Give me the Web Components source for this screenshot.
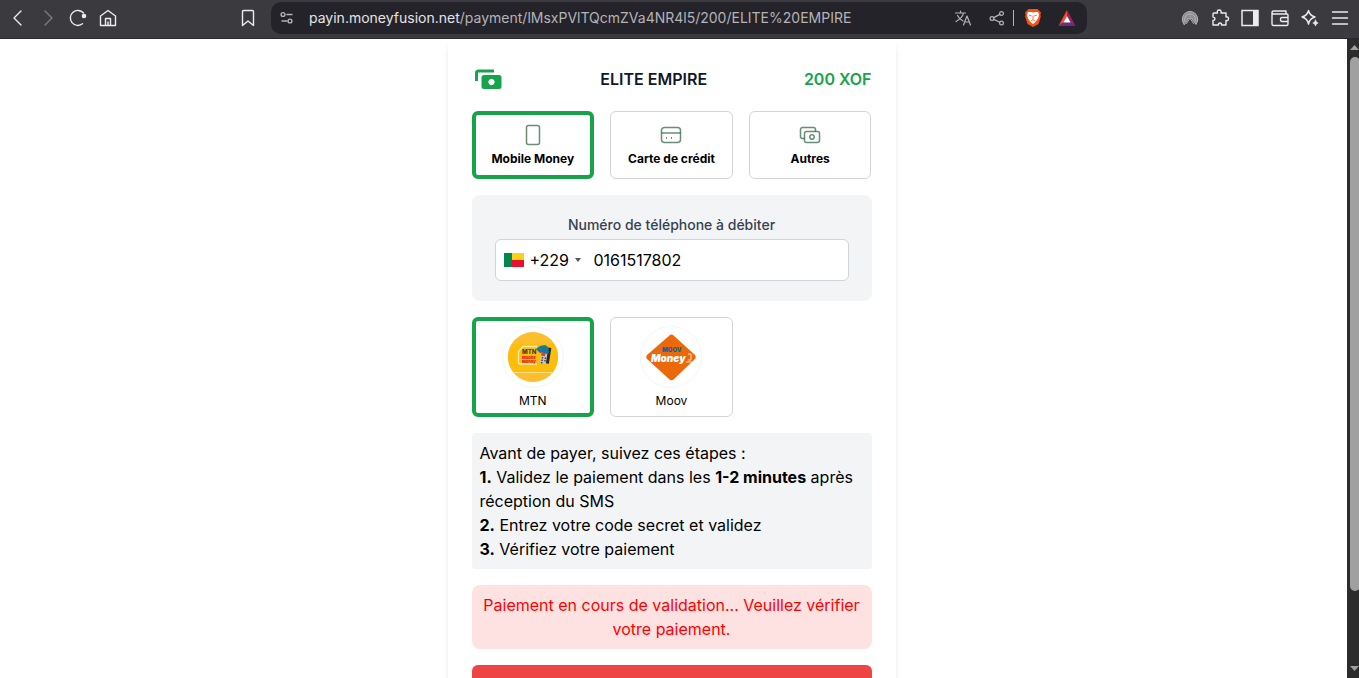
<!DOCTYPE html>
<html lang="fr">
<head>
<meta charset="utf-8">
<meta name="viewport" content="width=device-width, initial-scale=1">
<title>ELITE EMPIRE</title>
<style>
html, body { margin: 0; height: 100%; }
body { font-family: Inter, "Liberation Sans", sans-serif; font-size: 16px; line-height: 24px; color: #000; background: #fff; overflow: hidden; }
</style>
</head>
<body>
<app-window>
  <browser-bar slot="bar" host="payin.moneyfusion.net" path="/payment/lMsxPVlTQcmZVa4NR4l5/200/ELITE%20EMPIRE"></browser-bar>
  <pay-card merchant="ELITE EMPIRE" amount="200 XOF">
    <option-grid>
      <method-option label="Mobile Money" selected>
        <svg width="24" height="24" viewBox="0 0 24 24" fill="none" stroke="#14532d" stroke-opacity=".65" stroke-width="1.5"><rect x="5.5" y="2.5" width="13" height="19" rx="2"/></svg>
      </method-option>
      <method-option label="Carte de crédit">
        <svg width="24" height="24" viewBox="0 0 24 24" fill="none" stroke="#14532d" stroke-opacity=".65" stroke-width="1.5"><rect x="2.5" y="4.5" width="19" height="15" rx="3"/><path d="M2.5 10h19"/><path stroke-width="1" d="M7.5 14v2M12.5 14v2"/></svg>
      </method-option>
      <method-option label="Autres">
        <svg width="24" height="24" viewBox="0 0 24 24" fill="none" stroke="#14532d" stroke-opacity=".65" stroke-width="1.5"><path d="M6.5 15.5H4.5a2 2 0 0 1-2-2v-7a2 2 0 0 1 2-2h11a2 2 0 0 1 2 2v2"/><rect x="6.5" y="8.5" width="15" height="11" rx="2"/><circle cx="14" cy="14" r="2.2"/></svg>
      </method-option>
    </option-grid>
    <phone-field label="Numéro de téléphone à débiter" prefix-code="+229" value="0161517802"></phone-field>
    <option-grid>
      <operator-option label="MTN" selected>
        <svg width="50" height="50" viewBox="0 0 50 50">
          <circle cx="25" cy="25" r="25" fill="#fdbe2d"/>
          <path d="M3.700 12H46.300A25 25 0 0 1 44.600 40.500H5.400A25 25 0 0 1 3.700 12z" fill="#fdbd0c"/>
          <path d="M6 40.500h38" stroke="#fde08a" stroke-width="1"/>
          <path d="M29 32H12q-1.500 0-1.500-1.500V19.500L15 14.500h14" fill="none" stroke="#fff0a8" stroke-width="1.300"/>
          <g transform="rotate(9 36 24)"><rect x="36" y="15" width="6" height="16" fill="#2b2b2d"/><rect x="33" y="15" width="6" height="17" fill="#c4c4c4"/><path d="M33 18h4v6h-4z" fill="#e63b2e"/><path d="M34 26h1.500M37 26h1.500M34 28.500h1.500M37 28.500h1.500M34 31h1.500" stroke="#333" stroke-width="1.300"/></g>
          <path d="M28 17l4-3 5-1 3 2 1 6-3 1-3-2-3 1z" fill="#16799c"/>
          <text x="14" y="22" font-family="Inter, sans-serif" font-size="6" font-weight="800" fill="#4a3b18">MTN</text>
          <text x="14" y="27" font-family="Inter, sans-serif" font-size="4" font-weight="900" fill="#e2231a">Mobile</text>
          <text x="14" y="31" font-family="Inter, sans-serif" font-size="4" font-weight="900" fill="#e2231a">Money</text>
        </svg>
      </operator-option>
      <operator-option label="Moov">
        <svg width="50" height="50" viewBox="0 0 50 50">
          <path d="M24 3q1.500-1.200 3 0L49 23q1.500 2 0 4L27.500 47.500q-2 1.500-4 0L1 27q-1.500-2 0-4z" fill="#eb690b"/>
          <text x="16" y="20" font-family="Inter, sans-serif" font-size="6" font-weight="900" fill="#1c5f92">MOOV</text>
          <text x="5" y="30" font-family="Inter, sans-serif" font-size="10" font-weight="900" font-style="italic" fill="#fff">Money</text>
          <path d="M42 22h3v6h-3M40 30h6" fill="none" stroke="#ffdcc0" stroke-width="1"/>
        </svg>
      </operator-option>
    </option-grid>
    <note-box>Avant de payer, suivez ces étapes :<br><b>1.</b> Validez le paiement dans les <b>1-2 minutes</b> après <wbr>réception du SMS<br><b>2.</b> Entrez votre code secret et validez<br><b>3.</b> Vérifiez votre paiement</note-box>
    <note-box kind="alert">Paiement en cours de validation... Veuillez vérifier votre paiement.</note-box>
    <action-button></action-button>
  </pay-card>
</app-window>

<script>
class Base extends HTMLElement {
  constructor() {
    super();
    this.attachShadow({ mode: 'open' });
  }
  connectedCallback() { this.shadowRoot.innerHTML = this.render(); }
  attr(name) { return this.getAttribute(name) || ''; }
}

class AppWindow extends Base {
  render() {
    return `<style>
      :host { display: grid; grid-template-rows: auto minmax(0, 1fr); height: 100vh; }
      .view { display: flex; overflow: hidden; min-height: 0; }
      main { flex: 1; display: flex; justify-content: center; align-items: flex-start; padding-right: 4px; }
    </style>
    <slot name="bar"></slot>
    <div class="view"><main><slot></slot></main><page-scroller></page-scroller></div>`;
  }
}

class PageScroller extends Base {
  render() {
    return `<style>
      :host { display: flex; flex-direction: column; align-items: flex-end; box-sizing: border-box; width: 12px; background: #2c2c2c; padding: 6px 0 6px; overflow: hidden; }
      svg { display: block; flex: none; }
      .track { flex: 1; display: grid; grid-template-rows: 534fr 69fr; width: 9px; padding: 6px 0; overflow: hidden; }
      .thumb { width: 10px; background: #a0a0a0; border-radius: 5px; }
    </style>
    <svg width="9" height="6" viewBox="0 0 9 6"><path d="M0 5L4.500 0L9 5z" fill="#a0a0a0"/></svg>
    <div class="track"><div class="thumb"></div></div>
    <svg width="9" height="6" viewBox="0 0 9 6"><path d="M0 0H9L4.500 5z" fill="#a0a0a0"/></svg>`;
  }
}

class BrowserBar extends Base {
  render() {
    const b = (name, body) => `<button type="button" aria-label="${name}"><svg width="20" height="20" viewBox="0 0 20 20" fill="none" stroke="currentColor" stroke-width="1.400" stroke-linecap="round" stroke-linejoin="round">${body}</svg></button>`;
    return `<style>
      :host { display: grid; grid-template-columns: 271px minmax(0, 1fr) 272px; align-items: center; height: 36px; padding-bottom: 2px; border-bottom: 1px solid #2b2730; background: #3b3a3f; color: #ececee; }
      button { display: flex; align-items: center; justify-content: center; width: 30px; height: 32px; padding: 0; border: 0; background: none; color: inherit; }
      button[aria-label="Suivant"] { color: #7d7c81; }
      svg { display: block; flex: none; }
      nav, .tools { display: flex; align-items: center; }
      nav { padding: 0 8px 0 3px; }
      .gap { flex: 1; }
      .tools { justify-content: flex-end; padding-right: 4px; }
      .url { display: flex; align-items: center; height: 32px; padding-right: 3px; border-radius: 10px; background: #242329; color: #b4b3b8; box-sizing: border-box; }
      .url button { width: 34px; }
      .url button:first-child { width: 32px; }
      .text { flex: 1; min-width: 0; padding-left: 6px; font-size: 14px; line-height: 20px; white-space: nowrap; overflow: hidden; }
      .host { color: #e4e3e8; }
      .sep { width: 1px; height: 16px; margin-right: 2px; background: #b4b3b8; }
    </style>
    <nav>
      ${b('Précédent', '<path d="M13 3L6 10l7 7"/>')}
      ${b('Suivant', '<path d="M7 3l7 7-7 7"/>')}
      ${b('Actualiser', '<path d="M14.500 15.800A7.500 7.500 0 1 1 15.500 5"/><circle cx="16" cy="8" r="1.600" fill="currentColor"/>')}
      ${b('Accueil', '<path d="M2.500 8L10 2.500 17.500 8v9.500h-15z"/><path d="M7.500 17v-6.500h5V17M10 14v3"/>')}
      <span class="gap"></span>
      ${b('Favori', '<path d="M4.500 3.500q0-1 1-1h9q1 0 1 1v14L10 13l-5.500 4.500z"/>')}
    </nav>
    <div class="url">
      ${b('Informations du site', '<circle cx="6" cy="6.500" r="1.900"/><path d="M10 6.500h5M5 13h5"/><circle cx="13" cy="13" r="1.900"/>')}
      <div class="text"><span class="host">${this.attr('host')}</span>${this.attr('path')}</div>
      ${b('Traduire', '<path stroke-width="1.200" d="M3.500 5h10M8.500 3v2M5.500 7.500q2 4 5.500 5.500M11.500 5q-1 5-7.500 8.500M11.500 17l3.500-9 3.500 9M12.800 14h4.400"/>')}
      ${b('Partager', '<g stroke-width="1.200"><circle cx="6" cy="10.500" r="1.900"/><circle cx="15.500" cy="5.500" r="1.900"/><circle cx="15.500" cy="15" r="1.900"/><path d="M7.800 9.600l6-3.200M7.800 11.400l6 2.800"/></g>')}
      <span class="sep"></span>
      ${b('Brave Shields', '<path stroke="none" fill="#fb5012" d="M5.500 1h9L18 4.500l-.6 2.300.4 1.700L15.500 16 10 19l-5.500-3L2.200 8.500l.4-1.700L2 4.500z"/><path stroke="none" fill="#fff" d="M5 4h3l2 .6L12 4h3l1 2.500-.8 3.500-2 3-1.700 2L10 16l-1.500-1-1.700-2-2-3L4 6.500z"/><path stroke="#fb5012" stroke-width=".8" d="M6.500 7.300l2 .6M13.500 7.300l-2 .6M10 8v3M8.500 12.500l1.500-.8 1.500.8"/>')}
      ${b('Récompenses', '<g stroke="none"><path fill="#ff4724" d="M10 2v6l-3.500 6.500L1.500 18z"/><path fill="#9e1f63" d="M10 2v6l3.500 6.500 5 3.500z"/><path fill="#662d91" d="M1.500 18l5-3.800h7l5 3.800z"/><path fill="#fff" d="M10 8l3.700 6.500H6.300z"/></g>')}
    </div>
    <div class="tools">
      ${b('VPN', '<path fill="#8e8e92" stroke="#b4b4b7" stroke-width="1" d="M4 16.500Q1.500 13 2.500 9.500 4.500 3.500 10 3.500t7.500 6q1 3.500-1.500 7L11 9.500q-1-1.500-2 0z"/><path stroke="#b4b4b7" stroke-width="1" d="M4.500 13Q4.500 6 10 6t5.500 7M6.500 15.500L10 10l3.500 5.500"/>')}
      ${b('Extensions', '<path d="M4 5h3.500q-.8-3 1.700-3t1.800 3H16v4q2.500-.6 2.500 1.800T16 12.500V17h-4.500q.2-2-1.500-2t-1.500 2H3v-4.500q2-.2 2-1.800T3 9V6q0-1 1-1z"/>')}
      ${b('Panneau latéral', '<path stroke-width="1.500" stroke-linejoin="miter" d="M2 2.500h16v15H2z"/><path stroke="none" fill="currentColor" d="M13 3h5v14h-5z"/>')}
      ${b('Portefeuille', '<path d="M2 4.500q0-1.500 1.500-1.500H16v3M2 4.500Q2 6 3.500 6H17q1 0 1 1v9q0 1.500-1.500 1.500h-13Q2 17.500 2 16zM18 9.500h-6q-1.500 0-1.500 2t1.500 2h6"/>')}
      ${b('Leo', '<path d="M8.500 2.500q1 5 6.500 6.500-5.500 1.500-6.500 7Q7.500 10.500 2 9q5.500-1.500 6.500-6.500z"/><path fill="currentColor" stroke-width=".6" d="M15.500 12q.4 2.500 2.700 3-2.300.6-2.700 3-.4-2.400-2.700-3 2.300-.5 2.700-3z"/>')}
      ${b('Menu', '<path d="M2.500 4h15M2.500 10h15M2.500 16h15"/>')}
    </div>`;
  }
}

class PayCard extends Base {
  render() {
    return `<style>
      :host { display: flex; flex-direction: column; gap: 16px; box-sizing: border-box; width: 100%; max-width: 448px; padding: 24px; border-radius: 8px; background: #fff; box-shadow: 0 4px 6px -1px rgba(0,0,0,.1), 0 2px 4px -2px rgba(0,0,0,.1); }
      header { display: flex; align-items: center; justify-content: space-between; font-weight: 600; }
      svg { display: block; }
      h1 { margin: 0; font-size: 16px; line-height: 24px; font-weight: 600; color: #111827; }
      .amount { color: #16a34a; }
    </style>
    <header>
      <svg width="32" height="32" viewBox="0 0 32 32"><path d="M4.500 18V10q0-2 2-2H22" fill="none" stroke="#16a34a" stroke-width="3" stroke-linejoin="round"/><path fill="#16a34a" fill-rule="evenodd" d="M12 12h15q2.500 0 2.500 2.500v9q0 2.500-2.500 2.500H12q-2.500 0-2.500-2.500v-9Q9.500 12 12 12zM19.500 15.800a3.200 3.200 0 1 0 .01 0z"/></svg>
      <h1>${this.attr('merchant')}</h1>
      <span class="amount">${this.attr('amount')}</span>
    </header>
    <slot></slot>`;
  }
}

class OptionGrid extends Base {
  render() {
    return `<style>
      :host { display: grid; grid-template-columns: repeat(3, minmax(0, 1fr)); gap: 16px; }
    </style><slot></slot>`;
  }
}

const optionStyle = `
  :host { display: flex; }
  button { flex: 1; display: flex; flex-direction: column; align-items: center; justify-content: center; gap: 4px; box-sizing: border-box; border: 1px solid #d1d5db; border-radius: 6px; background: #fff; color: #000; font: inherit; font-size: 12px; line-height: 16px; padding: 0; }
  :host([selected]) button { border: 4px solid #16a34a; }
  ::slotted(svg) { display: block; }`;

class MethodOption extends Base {
  render() {
    return `<style>${optionStyle}
      button { height: 68px; font-weight: 700; }
    </style>
    <button type="button" aria-pressed="${this.hasAttribute('selected')}"><slot></slot><span>${this.attr('label')}</span></button>`;
  }
}

class OperatorOption extends Base {
  render() {
    return `<style>${optionStyle}
      button { height: 100px; gap: 5px; padding-top: 1px; }
      .ring { display: flex; align-items: center; justify-content: center; width: 62px; height: 62px; border: 1px solid #f0f7fa; border-radius: 50%; box-sizing: border-box; }
    </style>
    <button type="button" aria-pressed="${this.hasAttribute('selected')}"><span class="ring"><slot></slot></span><span>${this.attr('label')}</span></button>`;
  }
}

class PhoneField extends Base {
  render() {
    return `<style>
      :host { display: flex; flex-direction: column; gap: 4px; padding: 20px 23px; border-radius: 8px; background: #f3f4f6; }
      label { text-align: center; font-size: 14px; line-height: 20px; font-weight: 500; color: #374151; }
      .field { display: flex; align-items: center; height: 40px; padding-left: 8px; border: 1px solid #d1d5db; border-radius: 6px; background: #fff; }
      svg { display: block; flex: none; }
      select { appearance: none; border: 0; background: none; margin: 0 0 0 6px; padding: 0 12px 0 0; width: 52px; font: inherit; color: #000; }
      .arrow { margin-left: -7px; pointer-events: none; }
      input { flex: 1; min-width: 0; border: 0; padding: 0; margin-left: 13px; background: none; font: inherit; color: #000; outline: 0; }
    </style>
    <label for="phone">${this.attr('label')}</label>
    <div class="field">
      <svg width="20" height="14" viewBox="0 0 20 14"><path d="M0 0h8v14H0z" fill="#008751"/><path d="M8 0h12v7H8z" fill="#fcd116"/><path d="M8 7h12v7H8z" fill="#e8112d"/></svg>
      <select aria-label="Indicatif"><option>${this.attr('prefix-code')}</option></select>
      <svg class="arrow" width="6" height="4" viewBox="0 0 6 4"><path d="M0 0h6L3 4z" fill="#555"/></svg>
      <input id="phone" type="tel" value="${this.attr('value')}">
    </div>`;
  }
}

class NoteBox extends Base {
  render() {
    return `<style>
      :host { display: block; padding: 8px; border-radius: 4px; background: #f3f4f6; }
      :host([kind="alert"]) { border-radius: 8px; background: #fee2e2; color: #f00; text-align: center; }
    </style><slot></slot>`;
  }
}

class ActionButton extends Base {
  render() {
    return `<style>
      :host { display: block; }
      button { display: block; width: 100%; height: 40px; border: 0; border-radius: 6px; background: #ef4444; color: #fff; font: inherit; }
    </style><button type="button" aria-label="Vérifier"></button>`;
  }
}

customElements.define('page-scroller', PageScroller);
customElements.define('browser-bar', BrowserBar);
customElements.define('option-grid', OptionGrid);
customElements.define('method-option', MethodOption);
customElements.define('operator-option', OperatorOption);
customElements.define('phone-field', PhoneField);
customElements.define('note-box', NoteBox);
customElements.define('action-button', ActionButton);
customElements.define('pay-card', PayCard);
customElements.define('app-window', AppWindow);
</script>
</body>
</html>
